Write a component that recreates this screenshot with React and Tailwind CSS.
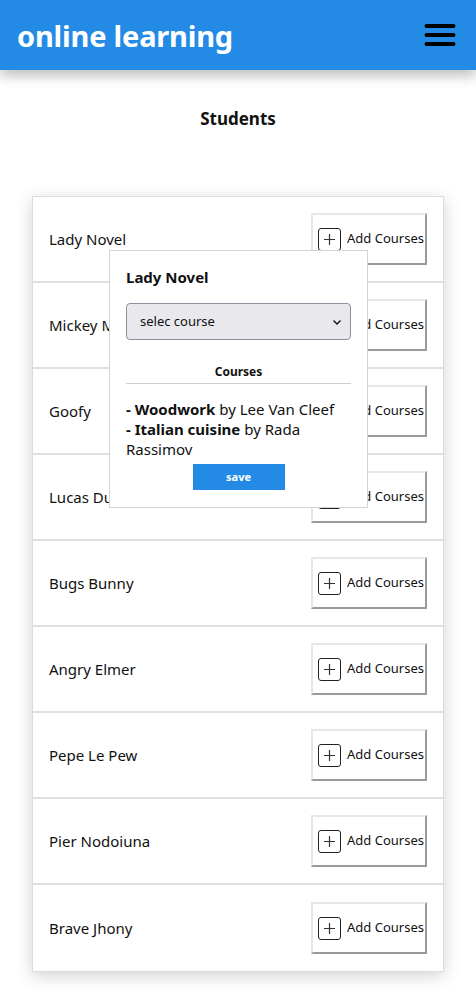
import React from "react";

const students = [
  "Lady Novel",
  "Mickey Mouse",
  "Goofy",
  "Lucas Duck",
  "Bugs Bunny",
  "Angry Elmer",
  "Pepe Le Pew",
  "Pier Nodoiuna",
  "Brave Jhony",
];

function PlusBox() {
  return (
    <span className="flex items-center justify-center w-[23px] h-[23px] border border-[#222] rounded-[3px] mr-[6px]">
      <svg width="13" height="13" viewBox="0 0 13 13">
        <path d="M6.5 1v11M1 6.5h11" stroke="#333" strokeWidth="1.2" />
      </svg>
    </span>
  );
}

export default function App() {
  return (
    <div className="min-h-[1000px] bg-white text-[#111]" style={{ fontFamily: '"Noto Sans", sans-serif' }}>
      <header className="h-[70px] bg-[#238be6] flex items-center justify-between pl-[17px] pr-[20px] shadow-[0_6px_12px_rgba(0,0,0,0.25)] relative z-10">
        <h1 className="text-white font-bold text-[29px] leading-none tracking-[-0.2px]">online learning</h1>
        <svg width="32" height="24" viewBox="0 0 32 24">
          <rect x="0.5" y="1" width="31" height="4" rx="2" fill="#000" />
          <rect x="0.5" y="10" width="31" height="4" rx="2" fill="#000" />
          <rect x="0.5" y="19" width="31" height="4" rx="2" fill="#000" />
        </svg>
      </header>
      <h2 className="text-center font-bold text-[17px] mt-[37px] leading-[24px]">Students</h2>
      <div className="relative mx-[32px] mt-[65px] border border-[#dcdcdc] shadow-[0_4px_16px_rgba(0,0,0,0.18)] bg-white">
        {students.map((s, i) => (
          <div
            key={s}
            className={`h-[86px] flex items-center justify-between pl-[16px] pr-[16px] ${i < students.length - 1 ? "border-b-2 border-[#e0e0e0]" : ""}`}
          >
            <span className="text-[15px]">{s}</span>
            <button className="w-[116px] h-[52px] flex items-center pl-[5px] bg-white border-2 border-t-[#e6e6e6] border-l-[#e6e6e6] border-r-[#9a9a9a] border-b-[#9a9a9a] text-[13px]">
              <PlusBox />
              <span>Add Courses</span>
            </button>
          </div>
        ))}
        <div className="absolute left-[76px] top-[53px] w-[259px] bg-white border border-[#d4d4d4] px-[16px] pt-[16px] pb-[17px]">
          <div className="font-bold text-[15px] leading-[20px]">Lady Novel</div>
          <div className="mt-[16px] h-[37px] bg-[#e9e9ed] border border-[#8f8f9d] rounded-[4px] flex items-center justify-between pl-[13px] pr-[8px] text-[13px]">
            <span>selec course</span>
            <svg width="10" height="8" viewBox="0 0 10 8">
              <path d="M1.5 2.5l3.5 3.5 3.5-3.5" stroke="#111" strokeWidth="1.4" fill="none" />
            </svg>
          </div>
          <div className="mt-[24px] text-center font-bold text-[12px] leading-[16px] pb-[3px] border-b border-[#cfcfcf]">Courses</div>
          <div className="mt-[15px] text-[15px] leading-[20px]">
            <div><b>- Woodwork</b> by Lee Van Cleef</div>
            <div><b>- Italian cuisine</b> by Rada Rassimov</div>
          </div>
          <div className="flex justify-center mt-[5px]">
            <button className="w-[92px] h-[26px] bg-[#238be6] text-white font-bold text-[11px]">save</button>
          </div>
        </div>
      </div>
    </div>
  );
}
